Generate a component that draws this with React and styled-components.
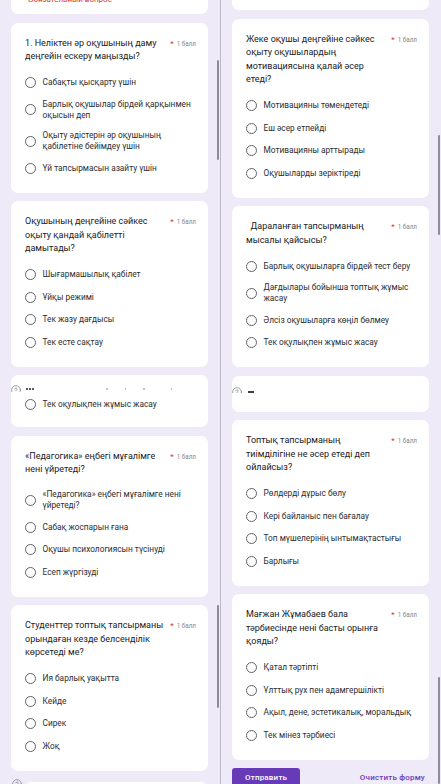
import React from 'react';
import styled, { createGlobalStyle } from 'styled-components';

const GlobalStyle = createGlobalStyle`
  * { box-sizing: border-box; }
  html, body {
    margin: 0;
    padding: 0;
    background: #efeaf7;
  }
  body {
    font-family: Roboto, "Noto Sans", "Liberation Sans", sans-serif;
  }
`;

const Page = styled.div`
  display: grid;
  grid-template-columns: 220px 1px 220px;
  width: 441px;
  height: 784px;
  overflow: hidden;
  background: #efeaf7;
`;

const Column = styled.div`
  position: relative;
  display: flex;
  flex-direction: column;
  gap: 8.5px;
  padding: 0 12px 0 11px;
  height: 784px;
  overflow: hidden;
`;

const Divider = styled.div`
  background: #bcb8c4;
`;

const ScrollThumb = styled.div`
  position: absolute;
  right: 1px;
  top: ${(p) => p.$top}px;
  height: ${(p) => p.$height}px;
  width: 2.5px;
  border-radius: 2px;
  background: #8f8c96;
`;

const Card = styled.div`
  flex-shrink: 0;
  position: relative;
  background: #ffffff;
  border-radius: 7px;
  padding: 14px 12px 18px 14px;
`;

// the card that is scrolled half out of view at the top
const CutCard = styled(Card)`
  height: 40px;
  margin-top: ${(p) => p.$visible - 40}px;
  padding: 0 12px 9.5px 17px;
  display: flex;
  align-items: flex-end;
`;

const RequiredNote = styled.div`
  font-size: 8px;
  line-height: 10px;
  color: #d93025;
`;

const QuestionHead = styled.div`
  display: flex;
  align-items: flex-start;
`;

const QuestionText = styled.div`
  flex: 1;
  font-size: 9px;
  line-height: 13.5px;
  color: #202124;
  white-space: pre-wrap;
`;

const Points = styled.div`
  flex-shrink: 0;
  width: 30px;
  display: flex;
  justify-content: flex-end;
  align-items: baseline;
  gap: 3px;
  font-size: 6.3px;
  line-height: 13.5px;
  color: #80868b;
`;

const Star = styled.span`
  color: #d93025;
  font-size: 8px;
`;

const Options = styled.div`
  display: flex;
  flex-direction: column;
  gap: 9.5px;
  margin-top: 12.5px;
`;

const Option = styled.div`
  display: flex;
  align-items: center;
  gap: 6.5px;
  min-height: 13px;
  margin: ${(p) => p.$margin || '0'};
`;

const Radio = styled.span`
  flex-shrink: 0;
  width: 11px;
  height: 11px;
  border: 1.4px solid #5f6368;
  border-radius: 50%;
`;

const OptionText = styled.span`
  font-size: 8.3px;
  line-height: 11px;
  color: #2b2d31;
`;

const GlitchCard = styled(Card)`
  height: ${(p) => p.$height}px;
  padding: 0 12px 0 0;
`;

const ClipRow = styled.div`
  height: ${(p) => p.$height}px;
  overflow: hidden;
  display: flex;
  align-items: flex-end;
`;

const HelpWrap = styled.span`
  flex-shrink: 0;
  display: flex;
  width: 10px;
  height: 10px;
  margin-bottom: ${(p) => p.$cut || 0}px;
`;

const Dot = styled.span`
  width: 1.6px;
  height: 1.6px;
  border-radius: 50%;
  margin: 0 0 2px ${(p) => p.$ml}px;
  background: ${(p) => (p.$faint ? '#b9bcc0' : '#3c4043')};
`;

const Dash = styled.span`
  width: 6px;
  height: 1.6px;
  margin-left: 6px;
  background: #3c4043;
`;

const FooterRow = styled.div`
  flex-shrink: 0;
  display: flex;
  align-items: flex-start;
  gap: 2px;
  padding-left: 1px;
`;

const FooterCard = styled(Card)`
  flex: 1;
  height: 60px;
  margin-top: 3px;
`;

const Actions = styled.div`
  flex-shrink: 0;
  display: flex;
  justify-content: space-between;
  align-items: center;
  padding-right: 4px;
`;

const SubmitButton = styled.button`
  height: 18px;
  padding: 0 13px;
  border: 0;
  border-radius: 3px;
  background: #673ab7;
  color: #ffffff;
  font-family: Roboto, sans-serif;
  font-size: 8px;
  font-weight: 500;
  letter-spacing: 0.2px;
`;

const ClearButton = styled.button`
  padding: 0;
  border: 0;
  background: none;
  color: #673ab7;
  font-family: Roboto, sans-serif;
  font-size: 8px;
  font-weight: 500;
  letter-spacing: 0.2px;
`;

const HelpIcon = ({ cut }) => (
  <HelpWrap $cut={cut}>
    <svg width="10" height="10" viewBox="0 0 24 24" fill="none" stroke="#80868b" strokeWidth="1.8" strokeLinecap="round">
      <circle cx="12" cy="12" r="10.5" />
      <path d="M9.1 9a3 3 0 0 1 5.8 1c0 2-3 3-3 3" />
      <path d="M12 17h.01" />
    </svg>
  </HelpWrap>
);

const Question = ({ text, options }) => (
  <Card>
    <QuestionHead>
      <QuestionText>{text}</QuestionText>
      <Points>
        <Star>*</Star>
        <span>1 балл</span>
      </Points>
    </QuestionHead>
    <Options>
      {options.map((opt, i) => (
        <Option key={i}>
          <Radio />
          <OptionText>{opt}</OptionText>
        </Option>
      ))}
    </Options>
  </Card>
);

const leftQuestions = [
  {
    text: '1. Неліктен әр оқушының даму деңгейін ескеру маңызды?',
    options: [
      'Сабақты қысқарту үшін',
      'Барлық оқушылар бірдей қарқынмен оқысын деп',
      'Оқыту әдістерін әр оқушының қабілетіне бейімдеу үшін',
      'Үй тапсырмасын азайту үшін',
    ],
  },
  {
    text: 'Оқушының деңгейіне сәйкес оқыту қандай қабілетті дамытады?',
    options: ['Шығармашылық қабілет', 'Ұйқы режимі', 'Тек жазу дағдысы', 'Тек есте сақтау'],
  },
];

const leftLower = [
  {
    text: '«Педагогика» еңбегі мұғалімге нені үйретеді?',
    options: [
      '«Педагогика» еңбегі мұғалімге нені үйретеді?',
      'Сабақ жоспарын ғана',
      'Оқушы психологиясын түсінуді',
      'Есеп жүргізуді',
    ],
  },
  {
    text: 'Студенттер топтық тапсырманы орындаған кезде белсенділік көрсетеді ме?',
    options: ['Ия барлық уақытта', 'Кейде', 'Сирек', 'Жоқ'],
  },
];

const rightQuestions = [
  {
    text: 'Жеке оқушы деңгейіне сәйкес оқыту оқушылардың мотивациясына қалай әсер етеді?',
    options: ['Мотивацияны төмендетеді', 'Еш әсер етпейді', 'Мотивацияны арттырады', 'Оқушыларды зеріктіреді'],
  },
  {
    text: '  Дараланған тапсырманың мысалы қайсысы?',
    options: [
      'Барлық оқушыларға бірдей тест беру',
      'Дағдылары бойынша топтық жұмыс жасау',
      'Әлсіз оқушыларға көңіл бөлмеу',
      'Тек оқулықпен жұмыс жасау',
    ],
  },
];

const rightLower = [
  {
    text: 'Топтық тапсырманың тиімділігіне не әсер етеді деп ойлайсыз?',
    options: ['Рөлдерді дұрыс бөлу', 'Кері байланыс пен бағалау', 'Топ мүшелерінің ынтымақтастығы', 'Барлығы'],
  },
  {
    text: 'Мағжан Жұмабаев бала тәрбиесінде нені басты орынға қояды?',
    options: ['Қатал тәртіпті', 'Ұлттық рух пен адамгершілікті', 'Ақыл, дене, эстетикалық, моральдық', 'Тек мінез тәрбиесі'],
  },
];

export default function App() {
  return (
    <>
      <GlobalStyle />
      <Page>
        <Column>
          <CutCard $visible={14}>
            <RequiredNote>Обязательный вопрос</RequiredNote>
          </CutCard>
          {leftQuestions.map((q, i) => (
            <Question key={i} {...q} />
          ))}
          <GlitchCard $height={52}>
            <ClipRow $height={17}>
              <HelpIcon cut={-3} />
              <Dot $ml={5} />
              <Dot $ml={1.6} />
              <Dot $ml={1.6} />
              <Dot $faint $ml={72} />
              <Dot $faint $ml={17} />
              <Dot $faint $ml={17} />
              <Dot $faint $ml={26} />
            </ClipRow>
            <Option $margin="5.5px 0 0 14px">
              <Radio />
              <OptionText>Тек оқулықпен жұмыс жасау</OptionText>
            </Option>
          </GlitchCard>
          {leftLower.map((q, i) => (
            <Question key={i} {...q} />
          ))}
          <FooterRow>
            <HelpIcon />
            <FooterCard />
          </FooterRow>
          <ScrollThumb $top={60} $height={100} />
          <ScrollThumb $top={605} $height={103} />
        </Column>

        <Divider />

        <Column>
          <CutCard $visible={10} />
          {rightQuestions.map((q, i) => (
            <Question key={i} {...q} />
          ))}
          <GlitchCard $height={36}>
            <ClipRow $height={17.5}>
              <HelpIcon cut={-3.5} />
              <Dash />
            </ClipRow>
          </GlitchCard>
          {rightLower.map((q, i) => (
            <Question key={i} {...q} />
          ))}
          <Actions>
            <SubmitButton>Отправить</SubmitButton>
            <ClearButton>Очистить форму</ClearButton>
          </Actions>
          <ScrollThumb $top={135} $height={100} />
          <ScrollThumb $top={677} $height={107} />
        </Column>
      </Page>
    </>
  );
}
